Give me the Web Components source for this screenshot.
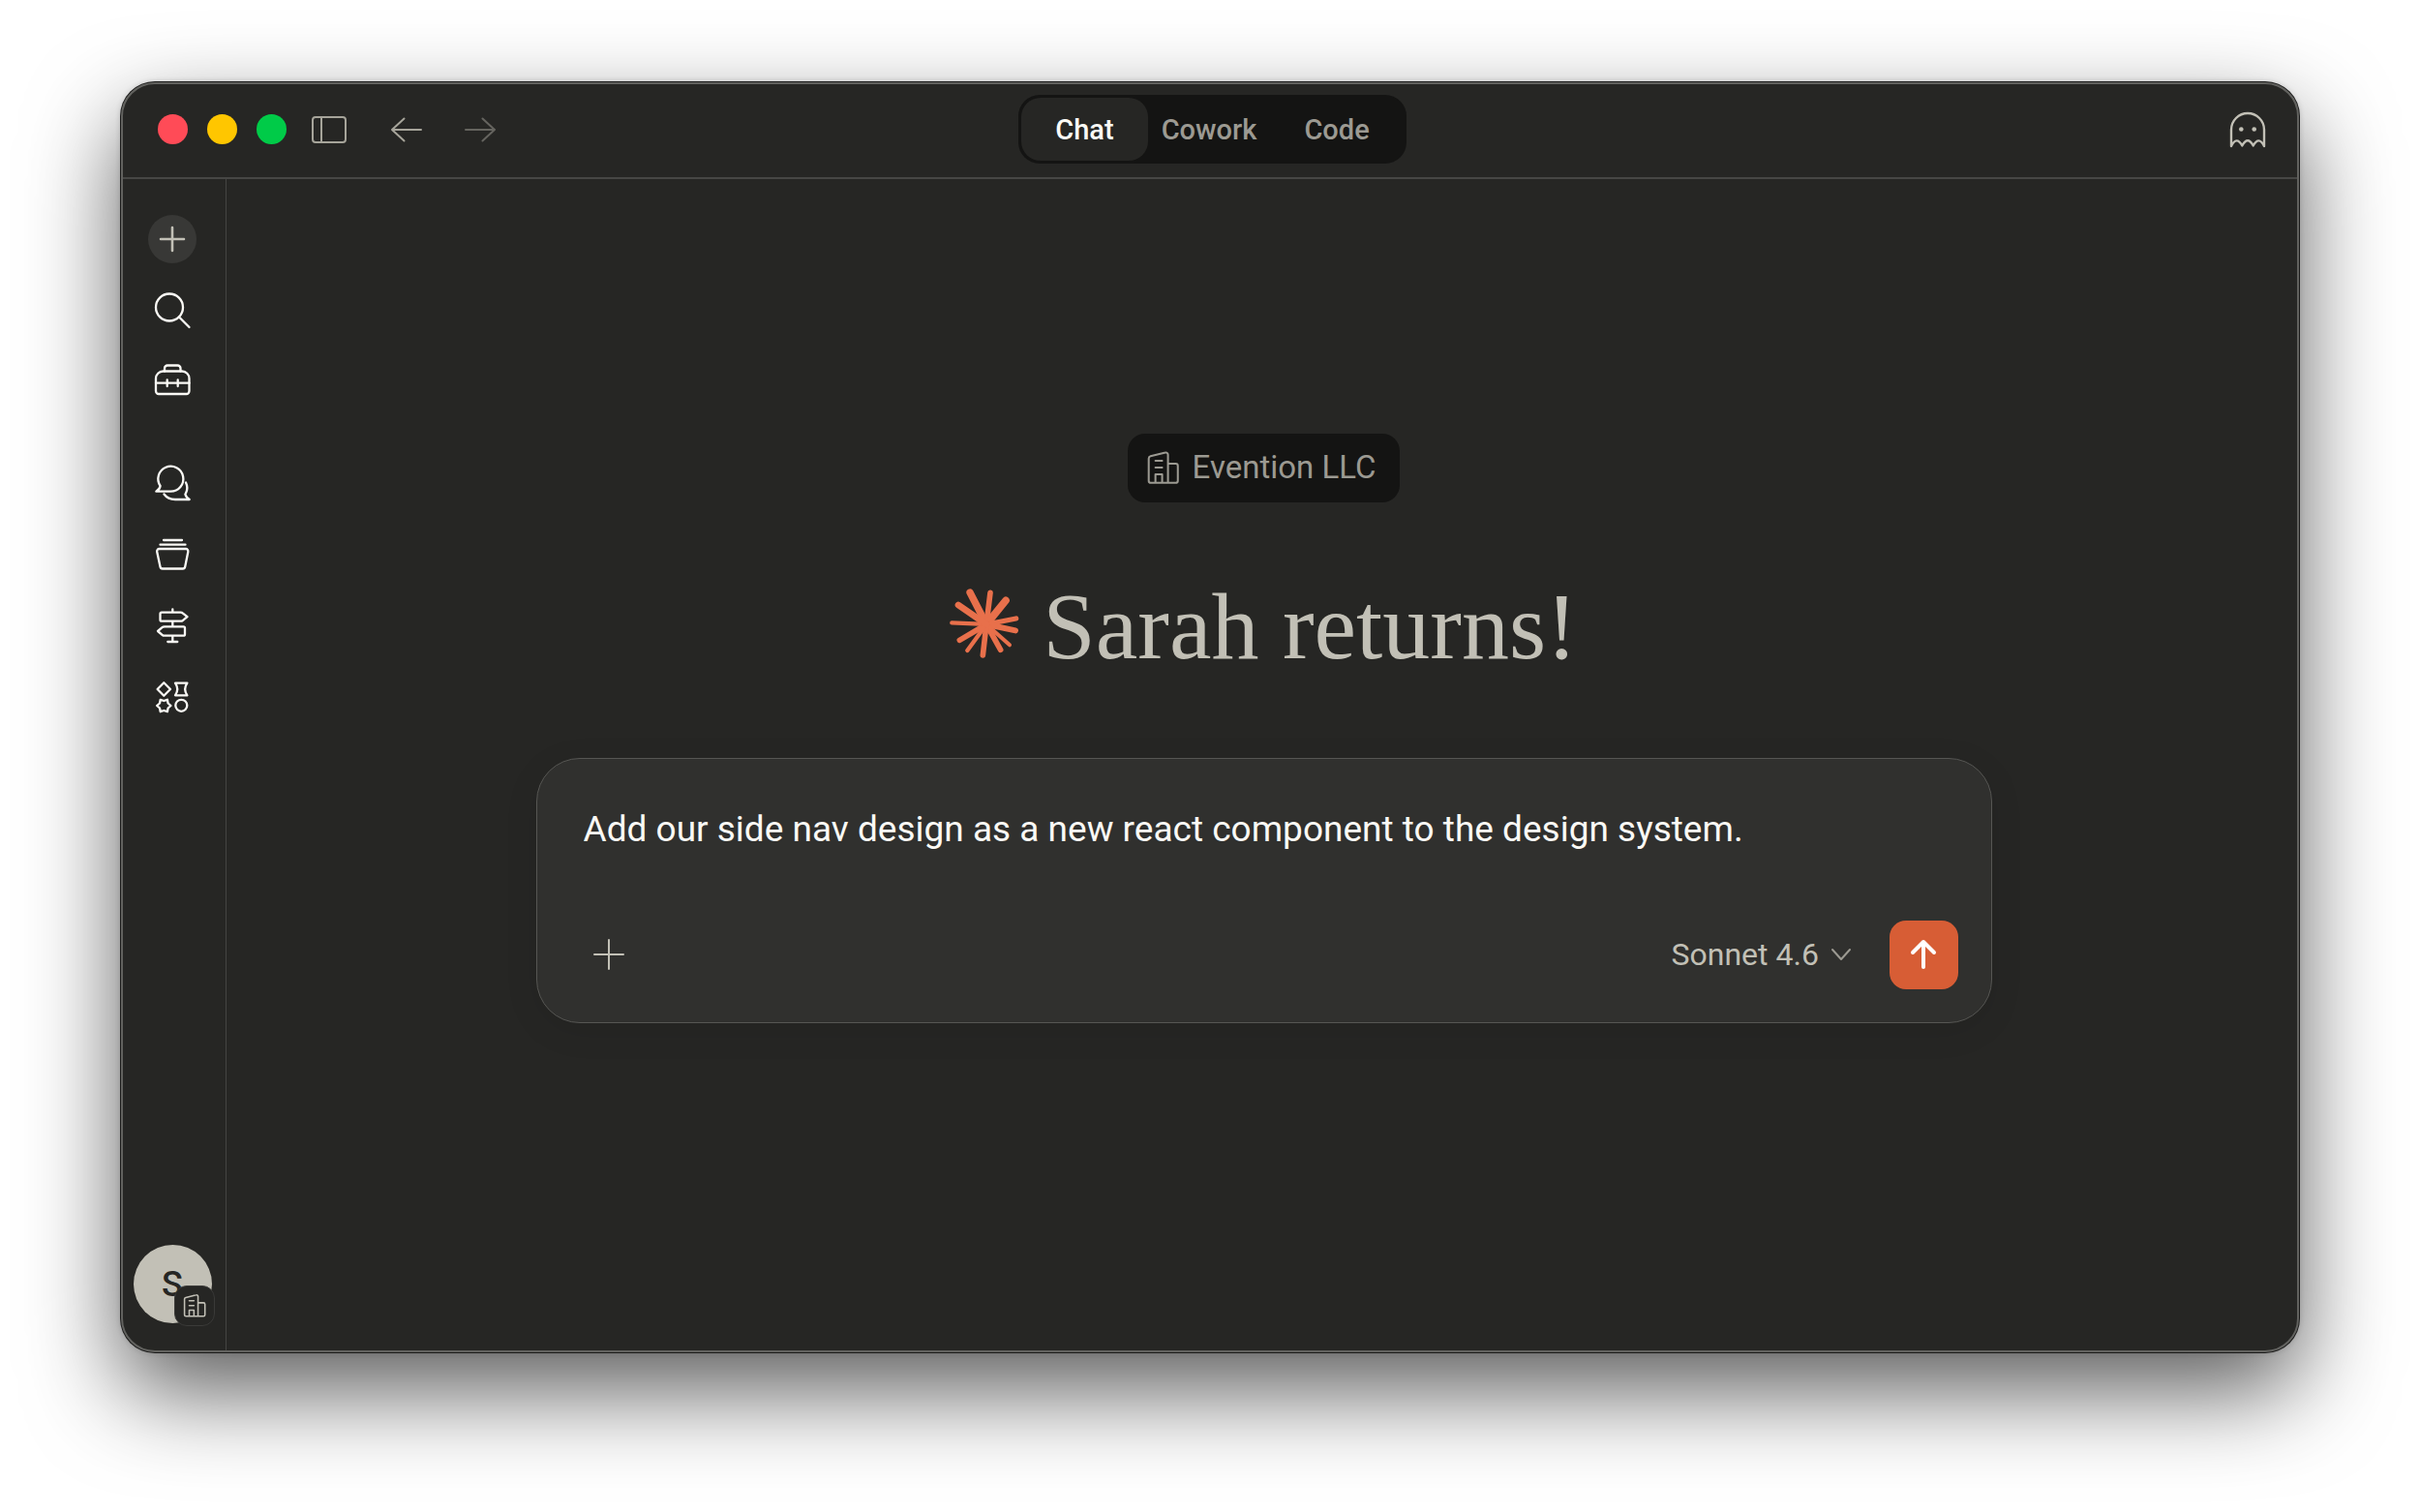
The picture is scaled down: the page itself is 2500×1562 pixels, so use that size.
<!DOCTYPE html>
<html lang="en">
<head>
<meta charset="utf-8">
<title>Chat</title>
<style>
    * {
        box-sizing: border-box;
    }
    body {
        margin: 0;
        min-height: 100vh;
        display: flex;
        padding: 85px 125px 165px;
        background: #fff;
        font-family: Roboto, "Liberation Sans", sans-serif;
        --bg: #262624;
        --sunken: #141413;
        --raised: #30302e;
        --text: #faf9f5;
        --soft: #c2c0b6;
        --muted: #9c9a92;
    }
</style>
</head>
<body>
<app-window>
    <title-bar slot="header">
        <mode-tabs></mode-tabs>
    </title-bar>
    <side-rail slot="rail"></side-rail>
    <org-badge>Evention LLC</org-badge>
    <greeting-title>Sarah returns!</greeting-title>
    <chat-composer text="Add our side nav design as a new react component to the design system."></chat-composer>
</app-window>

<script>
const icons = {
    panel: `<rect x="3" y="7" width="34" height="26" rx="3"/><path d="M12 7v26"/>`,
    back: `<path d="M35 20H5M17.5 8.5L5 20l12.5 11.5"/>`,
    forward: `<path d="M5 20h30M22.5 8.5L35 20 22.5 31.5"/>`,
    ghost: `<path d="M3 37V20a17 17 0 0 1 34 0v17Q31.5 26 25.7 36.5 20 26 14.3 36.5 8.5 26 3 37z"/>
        <g fill="currentColor" stroke="none"><circle cx="13.3" cy="19.5" r="2.3"/><circle cx="26.7" cy="19.5" r="2.3"/></g>`,
    plus: `<path d="M20 8v24M8 20h24"/>`,
    bigplus: `<path d="M20 5v30M5 20h30"/>`,
    search: `<circle cx="17" cy="16.5" r="14"/><path d="M27 26.5L37.5 37"/>`,
    briefcase: `<path d="M10.5 8.5H30a7.5 7.5 0 0 1 7.5 7.5v13a3 3 0 0 1-3 3H6a3 3 0 0 1-3-3V16a7.5 7.5 0 0 1 7.5-7.5z"/>
        <path d="M12 8.5v-3a3 3 0 0 1 3-3h10.5a3 3 0 0 1 3 3v3M3 20.7h34.5M14.7 17.5V24M25.7 17.5V24"/>`,
    chats: `<path d="M18.3 28.7H3.3Q7 26.5 7.6 23A13 13 0 1 1 18.3 28.7z"/>
        <path d="M11.5 31.5Q15.5 37 23 37h14.7Q34 34.5 33.4 31.5 37 25.5 34 19.5"/>`,
    projects: `<path d="M11 5h19M7.5 9.7h26M6.5 14H34a2.4 2.4 0 0 1 2.3 2.9l-3.1 15.6a2.5 2.5 0 0 1-2.5 2H10a2.5 2.5 0 0 1-2.5-2L4.2 16.9A2.4 2.4 0 0 1 6.5 14z"/>`,
    signpost: `<path d="M20.3 2.3v3.4M20.3 14.7v5.6M20.3 29.7V36M15.3 36h10M9 5.7h19.5q1.5 0 2.5.9l4.5 3.6-4.5 3.6q-1 .9-2.5.9H9q-1.5 0-1.5-1.5v-6q0-1.5 1.5-1.5zM31.5 20.3H12q-1.5 0-2.5.9L5 25l4.5 3.8q1 .9 2.5.9h19.5q1.5 0 1.5-1.5v-6.4q0-1.5-1.5-1.5z"/>`,
    shapes: `<path d="M11.3 4.3L18 11l-6.7 6.7L4.6 11z"/>
        <path d="M23 4.7h12.4q-4.5 6.3 0 12.6H23q4.5-6.3 0-12.6z"/>
        <circle cx="29.3" cy="27.8" r="6"/>
        <path d="M18.5 28l-2.9 2.5-.7 3.7-3.6-1.2-3.6 1.2-.7-3.7L4.1 28 7 25.5l.7-3.7 3.6 1.2 3.6-1.2.7 3.7z"/>`,
    building: `<path d="M25.5 36.5h8.7a2.3 2.3 0 0 0 2.3-2.3V17.5a2.3 2.3 0 0 0-2.3-2.3h-8.7M25.5 36.5V5a2.3 2.3 0 0 0-2.9-2.2L6 6.8A2.7 2.7 0 0 0 4 9.4v24.8a2.3 2.3 0 0 0 2.3 2.3h19.2M11.5 12H19M11.5 19.5H19M11.5 36.5V27H19v9.5"/>`,
    chevron: `<path d="M11 15l9 10 9-10"/>`,
    send: `<path d="M20 33V7M9 18L20 7l11 11"/>`
};

class UiIcon extends HTMLElement {
    constructor() {
        super();
        this.attachShadow({mode: "open"});
    }

    connectedCallback() {
        this.shadowRoot.innerHTML = `
        <style>
            :host {
                display: block;
                flex: none;
                width: var(--size, 40px);
                height: var(--size, 40px);
            }
            svg {
                display: block;
                width: 100%;
                height: 100%;
                fill: none;
                stroke: currentColor;
                stroke-width: var(--stroke, 2);
                stroke-linecap: round;
                stroke-linejoin: round;
            }
        </style>
        <svg viewBox="0 0 40 40" aria-hidden="true">${icons[this.getAttribute("name")]}</svg>
        `;
    }
}

class AppWindow extends HTMLElement {
    constructor() {
        super();
        this.attachShadow({mode: "open"});
    }

    connectedCallback() {
        this.shadowRoot.innerHTML = `
        <style>
            :host {
                flex: 1;
                display: flex;
                flex-direction: column;
                box-sizing: border-box;
                overflow: hidden;
                background: var(--bg);
                border: 2px solid #62625f;
                border-radius: 35px;
                box-shadow: 0 0 0 1px #1b1b1a, 0 0 6px rgba(0, 0, 0, 0.2), 0 40px 96px rgba(0, 0, 0, 0.64);
            }
            .body {
                flex: 1;
                display: flex;
            }
            main {
                flex: 1;
                display: flex;
                flex-direction: column;
                align-items: center;
                justify-content: center;
                padding: 0 36px 76px 40px;
            }
        </style>
        <slot name="header"></slot>
        <div class="body">
            <slot name="rail"></slot>
            <main><slot></slot></main>
        </div>
        `;
    }
}

class TitleBar extends HTMLElement {
    constructor() {
        super();
        this.attachShadow({mode: "open"});
    }

    connectedCallback() {
        this.shadowRoot.innerHTML = `
        <style>
            :host {
                display: grid;
                grid-template-columns: 1fr auto 1fr;
                align-items: center;
                padding: 11px 31px 14px 36px;
                border-bottom: 2px solid #474745;
            }
            button {
                padding: 0;
                border: 0;
                background: none;
                color: #a6a49a;
                cursor: pointer;
            }
            .left, .lights, .history {
                display: flex;
                align-items: center;
            }
            .left {
                gap: 40px;
            }
            .lights {
                gap: 20px;
            }
            .lights button {
                width: 31px;
                height: 31px;
                border-radius: 50%;
            }
            .close { background: #ff4b57; }
            .min { background: #ffc600; }
            .max { background: #00cb48; }
            .lights + button {
                margin-left: -16px;
            }
            .history {
                gap: 36px;
            }
            .history button:disabled {
                color: #65645f;
            }
            .ghost {
                justify-self: end;
                color: var(--soft);
                --stroke: 2.4;
            }
        </style>
        <div class="left">
            <div class="lights">
                <button class="close" aria-label="Close"></button>
                <button class="min" aria-label="Minimize"></button>
                <button class="max" aria-label="Zoom"></button>
            </div>
            <button aria-label="Toggle sidebar"><ui-icon name="panel"></ui-icon></button>
            <div class="history">
                <button aria-label="Back"><ui-icon name="back"></ui-icon></button>
                <button aria-label="Forward" disabled><ui-icon name="forward"></ui-icon></button>
            </div>
        </div>
        <slot></slot>
        <button class="ghost" aria-label="Incognito chat"><ui-icon name="ghost"></ui-icon></button>
        `;
    }
}

class ModeTabs extends HTMLElement {
    constructor() {
        super();
        this.attachShadow({mode: "open"});
    }

    connectedCallback() {
        this.shadowRoot.innerHTML = `
        <style>
            :host {
                display: flex;
                padding: 3px;
                border-radius: 22px;
                background: var(--sunken);
            }
            button {
                height: 65px;
                padding: 0 35px;
                border: 0;
                border-radius: 20px;
                background: none;
                color: var(--muted);
                font: 500 29px/36px Roboto, sans-serif;
                cursor: pointer;
            }
            .cowork {
                padding: 0 14px;
            }
            .active {
                background: var(--bg);
                color: var(--text);
            }
        </style>
        <button class="active">Chat</button>
        <button class="cowork">Cowork</button>
        <button>Code</button>
        `;
    }
}

class SideRail extends HTMLElement {
    constructor() {
        super();
        this.attachShadow({mode: "open"});
    }

    connectedCallback() {
        this.shadowRoot.innerHTML = `
        <style>
            :host {
                display: flex;
                flex-direction: column;
                align-items: center;
                justify-content: space-between;
                box-sizing: border-box;
                width: 107px;
                padding: 37px 4px 28px 0;
                border-right: 1px solid #454543;
            }
            button {
                display: flex;
                align-items: center;
                justify-content: center;
                width: 50px;
                height: 50px;
                padding: 0;
                border: 0;
                border-radius: 50%;
                background: none;
                color: var(--text);
                cursor: pointer;
            }
            nav, div {
                display: flex;
                flex-direction: column;
                gap: 24px;
            }
            nav {
                gap: 54px;
                --stroke: 2.3;
            }
            .new {
                background: #383836;
                color: var(--soft);
                --stroke: 2.6;
            }
            .avatar {
                position: relative;
                width: 81px;
                height: 81px;
                background: var(--soft);
                color: var(--bg);
                font: 500 36px/40px Roboto, sans-serif;
            }
            .org {
                position: absolute;
                right: -3px;
                bottom: -3px;
                display: flex;
                align-items: center;
                justify-content: center;
                box-sizing: border-box;
                width: 42px;
                height: 42px;
                border: 1px solid #3a3a38;
                border-radius: 13px;
                background: var(--bg);
                color: var(--soft);
                --size: 26px;
                --stroke: 2.4;
            }
        </style>
        <nav>
            <div>
                <button class="new" aria-label="New chat"><ui-icon name="plus"></ui-icon></button>
                <button aria-label="Search"><ui-icon name="search"></ui-icon></button>
                <button aria-label="Customize"><ui-icon name="briefcase"></ui-icon></button>
            </div>
            <div>
                <button aria-label="Chats"><ui-icon name="chats"></ui-icon></button>
                <button aria-label="Projects"><ui-icon name="projects"></ui-icon></button>
                <button aria-label="Guides"><ui-icon name="signpost"></ui-icon></button>
                <button aria-label="Artifacts"><ui-icon name="shapes"></ui-icon></button>
            </div>
        </nav>
        <button class="avatar">S<span class="org"><ui-icon name="building"></ui-icon></span></button>
        `;
    }
}

class OrgBadge extends HTMLElement {
    constructor() {
        super();
        this.attachShadow({mode: "open"});
    }

    connectedCallback() {
        this.shadowRoot.innerHTML = `
        <style>
            :host {
                display: flex;
                align-items: center;
                gap: 12px;
                box-sizing: border-box;
                height: 71px;
                padding: 0 25px 0 18px;
                border-radius: 18px;
                background: var(--sunken);
                color: var(--muted);
                font-size: 33px;
                line-height: 40px;
                --size: 37px;
                --stroke: 2.2;
            }
        </style>
        <ui-icon name="building"></ui-icon>
        <slot></slot>
        `;
    }
}

class GreetingTitle extends HTMLElement {
    constructor() {
        super();
        this.attachShadow({mode: "open"});
    }

    connectedCallback() {
        // x, y and thickness of each ray, drawn from the hub outwards
        const rays = [
            [127, 66, 22], [190, 67, 17], [238, 91, 23], [270, 147, 16],
            [268, 184, 18], [250, 229, 12], [222, 244, 17], [167, 261, 17],
            [119, 246, 13], [95, 214, 17], [71, 160, 13], [91, 105, 20]
        ];
        this.shadowRoot.innerHTML = `
        <style>
            :host {
                display: flex;
                align-items: baseline;
                gap: 24px;
                margin: 72px 0 80px;
            }
            svg {
                flex: none;
                width: 72px;
                height: 72px;
                stroke: #e8704b;
                stroke-linecap: round;
            }
            h1 {
                margin: 0;
                color: var(--soft);
                font: 400 98px/112px "Liberation Serif", serif;
            }
        </style>
        <svg viewBox="64 54 216 216" aria-hidden="true">
            <circle cx="178" cy="165" r="24" fill="#e8704b" stroke="none"/>
            ${rays.map(r => `<path d="M178 165L${r[0]} ${r[1]}" stroke-width="${r[2]}"/>`).join("")}
        </svg>
        <h1><slot></slot></h1>
        `;
    }
}

class ChatComposer extends HTMLElement {
    constructor() {
        super();
        this.attachShadow({mode: "open"});
    }

    connectedCallback() {
        this.shadowRoot.innerHTML = `
        <style>
            :host {
                display: block;
                width: 100%;
                max-width: 1504px;
            }
            form {
                display: flex;
                flex-direction: column;
                gap: 22px;
                padding: 49px 34px 34px 48px;
                border: 1px solid #565653;
                border-radius: 45px;
                background: var(--raised);
                box-shadow: 0 8px 36px rgba(0, 0, 0, 0.08);
            }
            textarea {
                display: block;
                width: 100%;
                padding: 0;
                border: 0;
                outline: 0;
                resize: none;
                overflow: hidden;
                background: none;
                color: var(--text);
                font: 400 37px/48px Roboto, sans-serif;
            }
            .tools, .model {
                display: flex;
                align-items: center;
            }
            .model {
                gap: 2px;
                margin-left: auto;
                margin-right: 30px;
                color: var(--muted);
            }
            select {
                appearance: none;
                padding: 0;
                border: 0;
                background: none;
                color: var(--soft);
                font: 400 32px/40px Roboto, sans-serif;
            }
            button {
                display: flex;
                align-items: center;
                justify-content: center;
                width: 52px;
                height: 52px;
                padding: 0;
                border: 0;
                background: none;
                color: var(--soft);
                cursor: pointer;
            }
            .send {
                width: 71px;
                height: 71px;
                border-radius: 17px;
                background: #d75d35;
                color: #fff;
                --stroke: 4;
            }
        </style>
        <form>
            <textarea rows="2" aria-label="Message"></textarea>
            <div class="tools">
                <button type="button" aria-label="Add files"><ui-icon name="bigplus"></ui-icon></button>
                <label class="model">
                    <select aria-label="Model"><option>Sonnet 4.6</option></select>
                    <ui-icon name="chevron"></ui-icon>
                </label>
                <button type="button" class="send" aria-label="Send"><ui-icon name="send"></ui-icon></button>
            </div>
        </form>
        `;
        this.shadowRoot.querySelector("textarea").value = this.getAttribute("text");
    }
}

customElements.define("ui-icon", UiIcon);
customElements.define("app-window", AppWindow);
customElements.define("title-bar", TitleBar);
customElements.define("mode-tabs", ModeTabs);
customElements.define("side-rail", SideRail);
customElements.define("org-badge", OrgBadge);
customElements.define("greeting-title", GreetingTitle);
customElements.define("chat-composer", ChatComposer);
</script>
</body>
</html>
